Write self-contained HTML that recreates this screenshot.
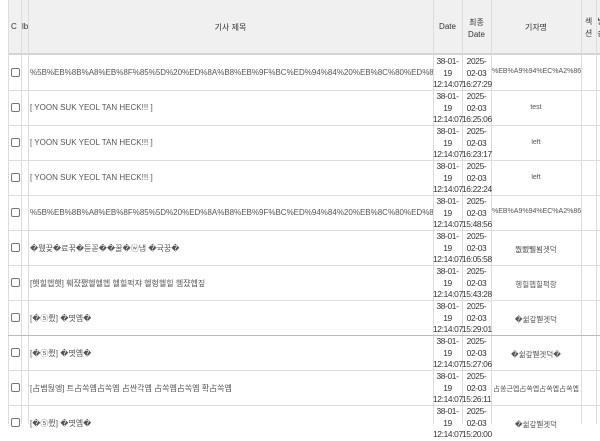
<!DOCTYPE html>
<html><head><meta charset="utf-8"><style>
*{margin:0;padding:0;box-sizing:border-box}
body{width:600px;height:424px;overflow:hidden;background:#fff;font-family:"Liberation Sans","Noto Sans CJK KR",sans-serif;color:#444;position:relative}
.hd{position:absolute;left:8px;top:0;width:600px;height:55px;background:#f0f0f0;border-bottom:2px solid #d4d4d4}
.v{position:absolute;top:0;height:424px;width:1px;background:#ddd}
.h{position:absolute;left:8px;width:600px;height:1px;background:#ddd}
.t{position:absolute;font-size:8px;white-space:nowrap;overflow:hidden;color:#555}
.c{position:absolute;text-align:center;font-size:8.4px;line-height:11.5px;color:#333;white-space:nowrap;letter-spacing:-0.35px}
.cb{position:absolute;left:11px;width:9px;height:9px;border:1px solid #777;border-radius:2px;background:#fff}
.th{position:absolute;font-size:8px;color:#333;text-align:center}
</style></head><body>
<div class="hd"></div>
<div class="v" style="left:8px;background:#ddd"></div>
<div class="v" style="left:21px"></div>
<div class="v" style="left:28px"></div>
<div class="v" style="left:433px"></div>
<div class="v" style="left:462px"></div>
<div class="v" style="left:491px"></div>
<div class="v" style="left:581px"></div>
<div class="v" style="left:596px"></div>
<div class="th" style="left:11px;top:22px">C</div>
<div class="th" style="left:22px;top:22px">lb</div>
<div class="th" style="left:28px;width:405px;top:22px">기사 제목</div>
<div class="th" style="left:433px;width:29px;top:22px">Date</div>
<div class="th" style="left:462px;width:29px;top:17px;line-height:12px">최종<br>Date</div>
<div class="th" style="left:491px;width:90px;top:22px">기자명</div>
<div class="th" style="left:581px;width:15px;top:16px;line-height:12px">섹<br>션</div>
<div class="th" style="left:596px;width:10px;top:16px;line-height:12px">방<br>송</div>
<div class="h" style="top:90px"></div><div class="h" style="top:125px"></div><div class="h" style="top:160px"></div><div class="h" style="top:195px"></div><div class="h" style="top:230px"></div><div class="h" style="top:265px"></div><div class="h" style="top:300px"></div><div class="h" style="top:335px;background:#bbb"></div><div class="h" style="top:370px"></div><div class="h" style="top:405px"></div>

<div class="cb" style="top:68px"></div><div class="t" style="left:30px;top:68px;width:403px">%5B%EB%8B%A8%EB%8F%85%5D%20%ED%8A%B8%EB%9F%BC%ED%94%84%20%EB%8C%80%ED%86%B5%EB%A0%B9</div>
<div class="c" style="left:433px;width:29px;top:56px">38-01-<br>19<br>12:14:07</div><div class="c" style="left:462px;width:29px;top:56px">2025-<br>02-03<br>16:27:29</div><div class="t" style="left:492px;width:89px;top:68px;font-size:7px">%EB%A9%94%EC%A2%86%EB</div>

<div class="cb" style="top:103px"></div><div class="t" style="left:30px;top:103px">[ YOON SUK YEOL TAN HECK!!! ]</div>
<div class="c" style="left:433px;width:29px;top:91px">38-01-<br>19<br>12:14:07</div><div class="c" style="left:462px;width:29px;top:91px">2025-<br>02-03<br>16:25:06</div><div class="t" style="left:491px;width:90px;top:104px;text-align:center;font-size:7px">test</div>

<div class="cb" style="top:138px"></div><div class="t" style="left:30px;top:138px">[ YOON SUK YEOL TAN HECK!!! ]</div>
<div class="c" style="left:433px;width:29px;top:126px">38-01-<br>19<br>12:14:07</div><div class="c" style="left:462px;width:29px;top:126px">2025-<br>02-03<br>16:23:17</div><div class="t" style="left:491px;width:90px;top:139px;text-align:center;font-size:7px">left</div>

<div class="cb" style="top:173px"></div><div class="t" style="left:30px;top:173px">[ YOON SUK YEOL TAN HECK!!! ]</div>
<div class="c" style="left:433px;width:29px;top:161px">38-01-<br>19<br>12:14:07</div><div class="c" style="left:462px;width:29px;top:161px">2025-<br>02-03<br>16:22:24</div><div class="t" style="left:491px;width:90px;top:174px;text-align:center;font-size:7px">left</div>

<div class="cb" style="top:208px"></div><div class="t" style="left:30px;top:208px;width:403px">%5B%EB%8B%A8%EB%8F%85%5D%20%ED%8A%B8%EB%9F%BC%ED%94%84%20%EB%8C%80%ED%86%B5%EB%A0%B9</div>
<div class="c" style="left:433px;width:29px;top:196px">38-01-<br>19<br>12:14:07</div><div class="c" style="left:462px;width:29px;top:196px">2025-<br>02-03<br>15:48:56</div><div class="t" style="left:492px;width:89px;top:208px;font-size:7px">%EB%A9%94%EC%A2%86%EB</div>

<div class="cb" style="top:243px"></div><div class="t" style="left:30px;top:243px">�뮀끚�료꾺�듄꼳��꿀�ⓦ냅 �귝꿍�</div>
<div class="c" style="left:433px;width:29px;top:231px">38-01-<br>19<br>12:14:07</div><div class="c" style="left:462px;width:29px;top:231px">2025-<br>02-03<br>16:05:58</div><div class="t" style="left:491px;width:90px;top:244px;text-align:center;font-size:7.5px">뛊뻸뛜뵘겟덕</div>

<div class="cb" style="top:278px"></div><div class="t" style="left:30px;top:278px">[햇힐헵햇] 훼쟜쨄헬헬헵 헬힐퍽쟈 헬헝헬힐 헴쟜헵짚</div>
<div class="c" style="left:433px;width:29px;top:266px">38-01-<br>19<br>12:14:07</div><div class="c" style="left:462px;width:29px;top:266px">2025-<br>02-03<br>15:43:28</div><div class="t" style="left:491px;width:90px;top:279px;text-align:center;font-size:7.5px">헹힐헵힐퍽항</div>

<div class="cb" style="top:313px"></div><div class="t" style="left:30px;top:313px">[�⑤쮰] �몃옙�</div>
<div class="c" style="left:433px;width:29px;top:301px">38-01-<br>19<br>12:14:07</div><div class="c" style="left:462px;width:29px;top:301px">2025-<br>02-03<br>15:29:01</div><div class="t" style="left:491px;width:90px;top:314px;text-align:center;font-size:7.5px">�쉶갚붿겟덕</div>

<div class="cb" style="top:348px"></div><div class="t" style="left:30px;top:348px">[�⑤쮰] �몃옙�</div>
<div class="c" style="left:433px;width:29px;top:336px">38-01-<br>19<br>12:14:07</div><div class="c" style="left:462px;width:29px;top:336px">2025-<br>02-03<br>15:27:06</div><div class="t" style="left:491px;width:90px;top:349px;text-align:center;font-size:7.5px">�쉶갚붿겟덕�</div>

<div class="cb" style="top:383px"></div><div class="t" style="left:30px;top:383px">[占뱀뒪엥] 트占쏙옙占쏙옙 占싼각옙 占쏙옙占쏙옙 확占쏙옙</div>
<div class="c" style="left:433px;width:29px;top:371px">38-01-<br>19<br>12:14:07</div><div class="c" style="left:462px;width:29px;top:371px">2025-<br>02-03<br>15:26:11</div><div class="t" style="left:491px;width:90px;top:384px;text-align:center;font-size:7px">占쏭근옙占쏙옙占쏙옙占쏙옙</div>

<div class="cb" style="top:418px"></div><div class="t" style="left:30px;top:418px">[�⑤쮰] �몃옙�</div>
<div class="c" style="left:433px;width:29px;top:406px">38-01-<br>19<br>12:14:07</div><div class="c" style="left:462px;width:29px;top:406px">2025-<br>02-03<br>15:20:00</div><div class="t" style="left:491px;width:90px;top:419px;text-align:center;font-size:7.5px">�쉶갚붿겟덕</div>
</body></html>
